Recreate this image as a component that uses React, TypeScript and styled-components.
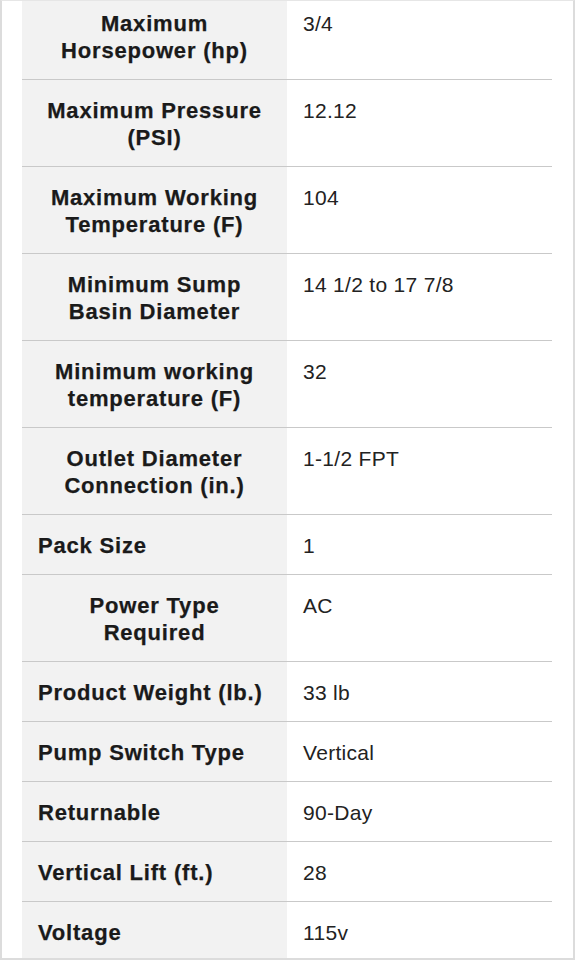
import React from 'react';
import styled, { createGlobalStyle } from 'styled-components';

const GlobalStyle = createGlobalStyle`
    html, body {
        margin: 0;
        padding: 0;
        background: #ffffff;
    }
    body {
        font-family: "Liberation Sans", Arial, Helvetica, sans-serif;
        color: #1c1c1c;
    }
`;

interface Spec {
    label: string;
    value: string;
}

const specs: Spec[] = [
    { label: 'Maximum Horsepower (hp)', value: '3/4' },
    { label: 'Maximum Pressure (PSI)', value: '12.12' },
    { label: 'Maximum Working Temperature (F)', value: '104' },
    { label: 'Minimum Sump Basin Diameter', value: '14 1/2 to 17 7/8' },
    { label: 'Minimum working temperature (F)', value: '32' },
    { label: 'Outlet Diameter Connection (in.)', value: '1-1/2 FPT' },
    { label: 'Pack Size', value: '1' },
    { label: 'Power Type Required', value: 'AC' },
    { label: 'Product Weight (lb.)', value: '33 lb' },
    { label: 'Pump Switch Type', value: 'Vertical' },
    { label: 'Returnable', value: '90-Day' },
    { label: 'Vertical Lift (ft.)', value: '28' },
    { label: 'Voltage', value: '115v' },
];

const App: React.FC = () => {
    return (
        <>
            <GlobalStyle />
            <Frame>
                <SpecTable>
                    {specs.map((s) => (
                        <Row key={s.label}>
                            <LabelCell>
                                <Label>{s.label}</Label>
                            </LabelCell>
                            <ValueCell>{s.value}</ValueCell>
                        </Row>
                    ))}
                </SpecTable>
            </Frame>
        </>
    );
};

const Frame = styled.div`
    box-sizing: border-box;
    height: 960px;
    overflow: hidden;
    border: 2px solid #dcdcdc;
    border-top: 1px solid #e6e6e6;
    padding: 0 21px 0 20px;
    background: #ffffff;
`;

// the list is scrolled a little, so the first row is cut at the top
const SpecTable = styled.div`
    margin-top: -8px;
    display: flex;
    flex-direction: column;
`;

const Row = styled.div`
    display: grid;
    grid-template-columns: 265px 1fr;
    border-bottom: 1px solid #c9c9c9;
`;

const LabelCell = styled.div`
    display: flex;
    align-items: flex-start;
    background: #f2f2f2;
    padding: 17px 16px 15px 16px;
`;

// shrinks to its text when it fits on one line, centred when it wraps
const Label = styled.div`
    text-align: center;
    font-size: 22px;
    line-height: 27px;
    font-weight: bold;
    letter-spacing: 0.8px;
    -webkit-text-stroke: 0.25px #1a1a1a;
    color: #1a1a1a;
`;

const ValueCell = styled.div`
    padding: 17px 16px 15px 16px;
    line-height: 27px;
    font-size: 21px;
    letter-spacing: 0.3px;
    color: #222222;
`;

export default App;
